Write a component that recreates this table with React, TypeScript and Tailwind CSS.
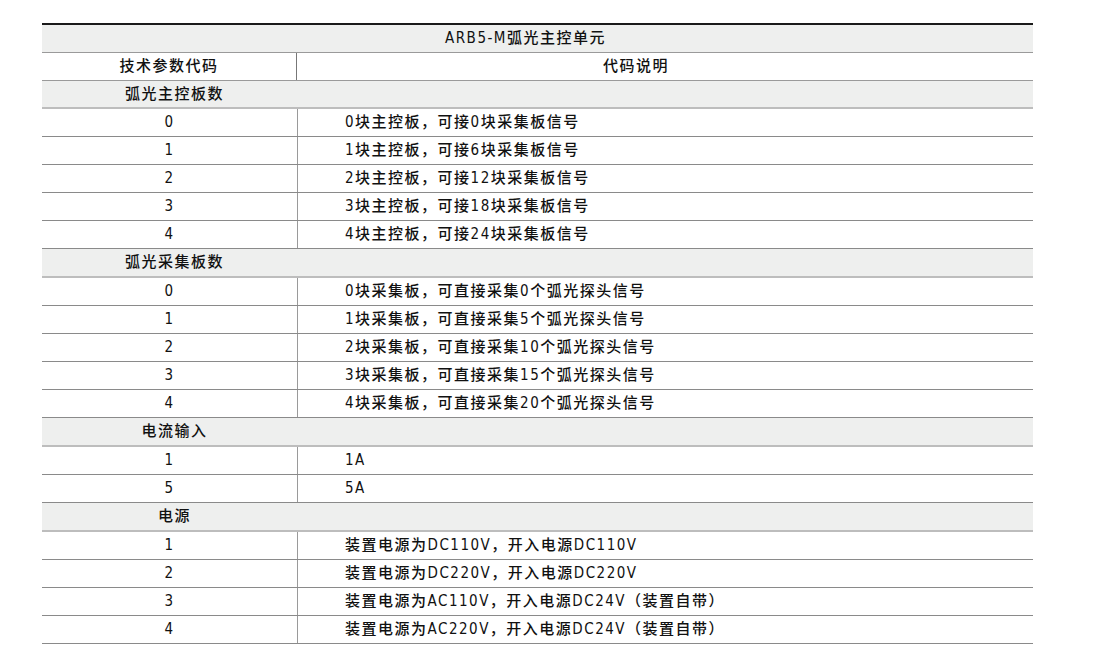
import React from 'react'

type Section = {
  label: string
  rows: [string, string][]
}

const sections: Section[] = [
  {
    label: '弧光主控板数',
    rows: [
      ['0', '0块主控板，可接0块采集板信号'],
      ['1', '1块主控板，可接6块采集板信号'],
      ['2', '2块主控板，可接12块采集板信号'],
      ['3', '3块主控板，可接18块采集板信号'],
      ['4', '4块主控板，可接24块采集板信号'],
    ],
  },
  {
    label: '弧光采集板数',
    rows: [
      ['0', '0块采集板，可直接采集0个弧光探头信号'],
      ['1', '1块采集板，可直接采集5个弧光探头信号'],
      ['2', '2块采集板，可直接采集10个弧光探头信号'],
      ['3', '3块采集板，可直接采集15个弧光探头信号'],
      ['4', '4块采集板，可直接采集20个弧光探头信号'],
    ],
  },
  {
    label: '电流输入',
    rows: [
      ['1', '1A'],
      ['5', '5A'],
    ],
  },
  {
    label: '电源',
    rows: [
      ['1', '装置电源为DC110V，开入电源DC110V'],
      ['2', '装置电源为DC220V，开入电源DC220V'],
      ['3', '装置电源为AC110V，开入电源DC24V（装置自带）'],
      ['4', '装置电源为AC220V，开入电源DC24V（装置自带）'],
    ],
  },
]

export default function App() {
  return (
    <div
      className="min-h-[672px] w-[1106px] bg-white pt-[23px] text-[15px] font-medium text-[#111] tracking-[1.5px]"
      style={{ fontFamily: '"DejaVu Sans Condensed", "Noto Sans CJK SC", sans-serif' }}
    >
      <div className="ml-[42px] w-[991px] border-t-2 border-[#1a1a1a]">
        <div className="flex h-[28px] items-center justify-center border-b border-[#9a9a9a] bg-[#eeefee] pr-[24px]">
          ARB5-M弧光主控单元
        </div>
        <div className="flex h-[28px] border-b border-[#9a9a9a]">
          <div className="flex w-[255px] items-center justify-center border-r border-[#777]">技术参数代码</div>
          <div className="flex flex-1 items-center justify-center pr-[58px]">代码说明</div>
        </div>
        {sections.map((s, i) => (
          <div key={s.label}>
            <div
              className={
                i === 0
                  ? 'flex h-[28px] border-b-2 border-[#bdbdbd] bg-[#eeefee]'
                  : 'flex h-[29px] border-b-2 border-[#bdbdbd] bg-[#eeefee]'
              }
            >
              <div className="flex w-[255px] items-center justify-center pl-[10px]">{s.label}</div>
            </div>
            {s.rows.map(([code, desc]) => (
              <div key={code} className="flex h-[28px] border-b border-[#8a8a8a]">
                <div className="flex w-[256px] items-center justify-center border-r border-[#9a9a9a]">{code}</div>
                <div className="flex flex-1 items-center pl-[47px]">{desc}</div>
              </div>
            ))}
          </div>
        ))}
      </div>
    </div>
  )
}
